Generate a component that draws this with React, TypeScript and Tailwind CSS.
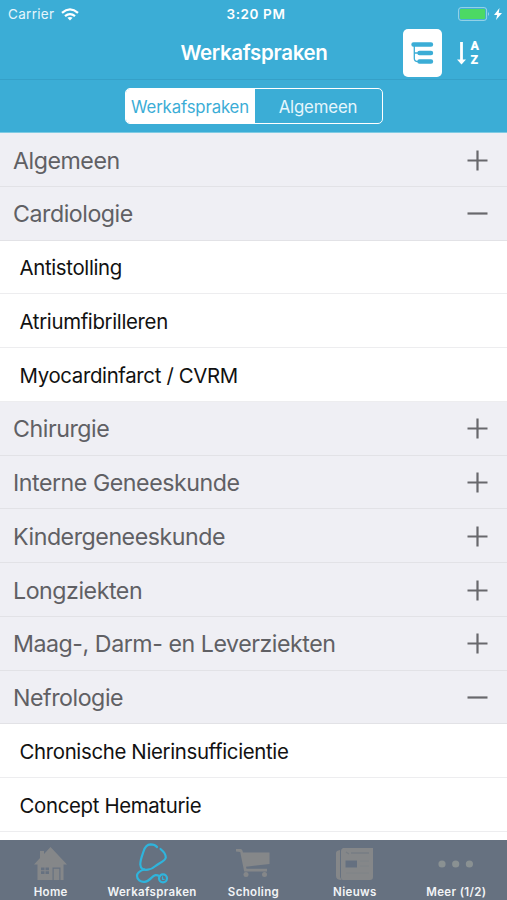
import React from "react";

type Row = { label: string; kind: "closed" | "open" | "item" };

const rows: Row[] = [
  { label: "Algemeen", kind: "closed" },
  { label: "Cardiologie", kind: "open" },
  { label: "Antistolling", kind: "item" },
  { label: "Atriumfibrilleren", kind: "item" },
  { label: "Myocardinfarct / CVRM", kind: "item" },
  { label: "Chirurgie", kind: "closed" },
  { label: "Interne Geneeskunde", kind: "closed" },
  { label: "Kindergeneeskunde", kind: "closed" },
  { label: "Longziekten", kind: "closed" },
  { label: "Maag-, Darm- en Leverziekten", kind: "closed" },
  { label: "Nefrologie", kind: "open" },
  { label: "Chronische Nierinsufficientie", kind: "item" },
  { label: "Concept Hematurie", kind: "item" },
];

function ListRow({ row }: { row: Row }) {
  if (row.kind === "item") {
    return (
      <li className="flex h-[53.75px] shrink-0 items-center border-b border-[#ededef] bg-white pt-[3px] pl-[19.5px] text-[20.4px] tracking-[-0.34px] text-[#111]">
        {row.label}
      </li>
    );
  }
  return (
    <li className="flex h-[53.75px] shrink-0 items-center justify-between border-b border-[#e2e2e6] bg-[#efeff4] pt-[1.5px] pr-[19px] pl-[13px] text-[23.2px] tracking-[-0.46px] text-[#606064]">
      <span className="pt-0.5">{row.label}</span>
      <svg width="21" height="21" viewBox="0 0 21 21" stroke="#68686c" strokeWidth="2.2" fill="none">
        <path d={row.kind === "closed" ? "M.5 10.5h20M10.5.5v20" : "M.5 10.5h20"} />
      </svg>
    </li>
  );
}

function HomeIcon() {
  return (
    <svg width="33" height="33" viewBox="0 0 33 33" fill="#858789">
      <path
        fillRule="evenodd"
        d="M16.5 0 33 17.5h-3.500V33H3.500V17.500H0L6 11V4h4v3zM7 20.500v2.700h3.500v-2.700zm4.500 0v2.700H15v-2.700zM7 24.200v2.700h3.500v-2.700zm4.500 0v2.700H15v-2.700zM18.500 20.500V33h1.200V21.700h5.600V33h1.200V20.500z"
      />
    </svg>
  );
}

function StethoscopeIcon() {
  return (
    <svg width="34" height="41" viewBox="0 0 34 41" fill="none" stroke="#2fb4dc" strokeWidth="2.2" strokeLinecap="round" strokeLinejoin="round">
      <path d="M22 4C20.500 2 18 1.400 15.500 1.400 12 1.600 10 4 8.700 8 7 13 5.200 17 5.300 21.500 5.500 26 8.500 27.300 13 26.700 16 26.300 18.500 24.800 20.500 23 23.500 20.500 30.500 18 30.800 14.500 30.800 11.500 28 8 25.500 6" />
      <path d="M9 26.500C5 27.800 2 30 2 33 2 36.500 5.500 39 9.500 38.800 15 38.500 16.500 33 20.500 32.200 22 32 23.500 32.600 24.800 33.200" />
      <circle cx="28" cy="35.300" r="4" />
      <path d="M27.500 33.800v2.500h1.600" strokeWidth="1.200" />
    </svg>
  );
}

function CartIcon() {
  return (
    <svg width="34" height="29" viewBox="0 0 34 29" fill="#858789">
      <path d="M0 0h4.500Q6 0 6.500 1.800L7 3.500h26.500V15L10 17.800l.5 2H31v2.700H8.200L4.200 3 0 2.500z" />
      <circle cx="10" cy="25.500" r="2.500" />
      <circle cx="28.500" cy="25.500" r="2.500" />
    </svg>
  );
}

function NewsIcon() {
  return (
    <svg width="37" height="32" viewBox="0 0 37 32">
      <path fill="#858789" d="M7 0h30v29q0 3-3 3H7q-2 0-2-3V3q0-2 2-3zM4 2v27l1.500 3Q0 32 0 28V5q0-2.500 4-3z" />
      <path stroke="#777d84" strokeWidth="1.300" d="M10 4l3 2M15 5h18" />
      <path stroke="#7e8387" d="M24 13h9M24 18h9M10 25h23" />
      <path fill="#657080" d="M9.500 12.500h11.500v7H9.500z" />
    </svg>
  );
}

function MoreIcon() {
  return (
    <svg width="36" height="8" viewBox="0 0 36 8" fill="#8a9192">
      <circle cx="4" cy="4" r="3.6" />
      <circle cx="17.7" cy="4" r="3.6" />
      <circle cx="31.4" cy="4" r="3.6" />
    </svg>
  );
}

const tabs = [
  { label: "Home", icon: <HomeIcon /> },
  { label: "Werkafspraken", icon: <StethoscopeIcon /> },
  { label: "Scholing", icon: <CartIcon /> },
  { label: "Nieuws", icon: <NewsIcon /> },
  { label: "Meer (1/2)", icon: <MoreIcon /> },
];

export default function App() {
  return (
    <div className="flex h-[900px] w-[507px] flex-col overflow-hidden bg-white font-['Inter','Liberation_Sans',sans-serif]">
      <header className="flex h-[133px] shrink-0 flex-col border-b border-[#7fcbe3] bg-[#3badd6] text-white">
        <div className="grid h-7 shrink-0 grid-cols-3 items-center pr-[5px] pl-2 text-[13.5px]">
          <div className="flex items-center gap-[7px] text-[#e6f6fc]">
            <span className="tracking-[0.3px]">Carrier</span>
            <svg width="18" height="13" viewBox="0 0 18 13" fill="none" stroke="white" strokeWidth="2.3">
              <path d="M1 4.8Q9-2 17 4.8M4 8.2Q9 4 14 8.2" />
              <path d="m9 12.5-2.6-2.7Q9 8 11.6 9.8z" fill="white" stroke="none" />
            </svg>
          </div>
          <span className="pl-0.5 text-center font-semibold tracking-[0.6px]">3:20 PM</span>
          <div className="flex items-center justify-end gap-1">
            <svg width="32" height="14" viewBox="0 0 32 14">
              <rect x=".6" y=".6" width="28" height="12.8" rx="2.5" fill="none" stroke="#9dd6e9" />
              <rect x="2" y="2" width="25.2" height="10" rx="1" fill="#4cd964" />
              <path d="M30 5q2 2 0 4z" fill="#9dd6e9" />
            </svg>
            <svg width="8" height="12" viewBox="0 0 8 12" fill="white">
              <path d="M5.5 0 0 7h3.2L2 12l6-7H4.7z" />
            </svg>
          </div>
        </div>
        <div className="grid h-[51.5px] shrink-0 grid-cols-[1fr_auto_1fr] items-center border-b border-[#35a0c8] pr-[28px]">
          <span className="col-start-2 pl-[29px] text-[20.5px] font-semibold tracking-[-0.3px]">Werkafspraken</span>
          <div className="flex items-center justify-end gap-[15px]">
            <div className="flex h-12 w-[39px] items-center justify-center rounded-[5px] bg-white">
              <svg width="23" height="23" viewBox="0 0 23 23" fill="none" stroke="#3badd6">
                <path d="M2.500 2.500H20M8.500 11H20M8.500 19.500H20" strokeWidth="4.400" strokeLinecap="round" />
                <path d="M3.300 3v13.500q0 3 3.500 3H8M3.300 11H8" strokeWidth="1.300" />
              </svg>
            </div>
            <div className="flex items-center gap-1">
              <svg width="9" height="23" viewBox="0 0 9 23">
                <path d="M4.500 0v18" stroke="white" strokeWidth="2.800" />
                <path d="M0 17.500h9l-4.500 5z" fill="white" />
              </svg>
              <div className="flex flex-col font-['Roboto'] text-[12.5px] leading-[14px] font-black">
                <span>A</span>
                <span>Z</span>
              </div>
            </div>
          </div>
        </div>
        <div className="flex grow items-center justify-center pt-px">
          <div className="flex h-9 w-[258px] overflow-hidden rounded-[5px] border-[1.5px] border-white text-[16.8px] tracking-[-0.15px]">
            <div className="flex w-[129px] items-center justify-center bg-white pt-0.5 text-[#3badd6]">Werkafspraken</div>
            <div className="flex grow items-center justify-center pt-0.5 text-[#e6f6fc]">Algemeen</div>
          </div>
        </div>
      </header>
      <ul className="flex min-h-0 grow flex-col overflow-hidden">
        {rows.map((row) => (
          <ListRow key={row.label} row={row} />
        ))}
      </ul>
      <nav className="grid h-[60px] shrink-0 grid-cols-5 bg-[#667180]">
        {tabs.map((tab) => (
          <div key={tab.label} className="flex flex-col items-center">
            <div className="flex h-[45px] items-center justify-center pt-0.5">{tab.icon}</div>
            <span className="text-[11.5px] leading-[14px] font-semibold tracking-[0.35px] whitespace-nowrap text-[#f2f4f6]">
              {tab.label}
            </span>
          </div>
        ))}
      </nav>
    </div>
  );
}
